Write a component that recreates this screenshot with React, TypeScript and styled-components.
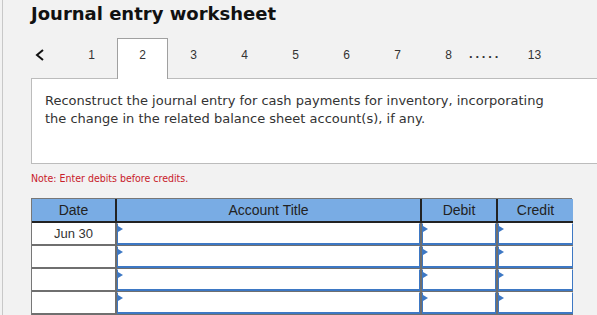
import React from "react";
import styled, { createGlobalStyle } from "styled-components";

const GlobalStyle = createGlobalStyle`
  html, body { margin: 0; padding: 0; background: #f2f2f2; }
  body { font-family: "Liberation Sans", Arial, sans-serif; }
`;

const Page = styled.div`
  margin-left: 2px;
  border-left: 1px solid #c8c8c8;
  background: #f2f2f2;
  min-height: 315px;
  padding-left: 28px;
  overflow: hidden;
`;

const Title = styled.h1`
  margin: 0;
  padding-top: 3px;
  height: 38px;
  box-sizing: border-box;
  font-family: "DejaVu Sans", Verdana, sans-serif;
  font-weight: bold;
  font-size: 18px;
  line-height: 21px;
  color: #111;
`;

const TabRow = styled.div`
  display: flex;
  align-items: stretch;
  height: 40px;
  position: relative;
  z-index: 1;
`;

const Chevron = styled.div`
  width: 35px;
  padding: 9px 0 0 4px;
  box-sizing: border-box;
`;

const Tab = styled.div<{ $active?: boolean }>`
  width: 51px;
  box-sizing: border-box;
  padding-top: 9px;
  text-align: center;
  font-size: 12px;
  line-height: 14px;
  color: #333;
  border: 1px solid ${(p) => (p.$active ? "#a0a0a0" : "transparent")};
  border-bottom: none;
  background: ${(p) => (p.$active ? "#fff" : "transparent")};
  height: ${(p) => (p.$active ? "41px" : "40px")};
`;

const Dots = styled.div`
  width: 40px;
  margin-left: -5px;
  padding-top: 9px;
  font-size: 13px;
  line-height: 14px;
  font-weight: bold;
  letter-spacing: 2.8px;
  color: #333;
`;

const Panel = styled.div`
  background: #fff;
  border: 1px solid #bcbcbc;
  border-right: none;
  height: 86px;
  box-sizing: border-box;
  padding: 13px 0 0 13px;
  margin-right: -10px;
`;

const Prompt = styled.p`
  margin: 0;
  width: 510px;
  font-family: "DejaVu Sans", Verdana, sans-serif;
  font-size: 13px;
  line-height: 18px;
  color: #333;
`;

const Note = styled.div`
  margin-top: 7px;
  height: 27px;
  font-family: "DejaVu Sans Condensed", "DejaVu Sans", Tahoma, sans-serif;
  font-size: 10.5px;
  line-height: 14px;
  color: #c8202a;
`;

const Grid = styled.div`
  display: grid;
  grid-template-columns: 85px 305px 76px 75px;
  width: 541px;
  box-sizing: border-box;
  border-top: 1px solid #777;
  border-left: 1px solid #777;
  border-right: 1px solid #777;
`;

const HeadCell = styled.div<{ $last?: boolean }>`
  height: 24px;
  box-sizing: border-box;
  background: #79ace4;
  border-right: ${(p) => (p.$last ? "none" : "2px solid #222")};
  border-bottom: 2px solid #222;
  text-align: center;
  font-size: 14px;
  line-height: 16px;
  padding-top: 3px;
  color: #222;
`;

const DateCell = styled.div`
  height: 23px;
  box-sizing: border-box;
  background: #fff;
  border-right: 2px solid #6f6f6f;
  border-bottom: 2px solid #6f6f6f;
  text-align: center;
  font-size: 13px;
  line-height: 15px;
  padding-top: 3px;
  color: #333;
`;

const InputCell = styled.div<{ $last?: boolean }>`
  height: 23px;
  box-sizing: border-box;
  background: #fff;
  border-right: ${(p) => (p.$last ? "none" : "2px solid #6f6f6f")};
  border-bottom: 1px solid #6f6f6f;
  display: flex;
`;

const Field = styled.div`
  flex: 1;
  position: relative;
  border: 1px solid #3d78c4;
  border-bottom: 2px solid #3d78c4;
  border-top-color: #fff;
  background: #fff;
  &::before {
    content: "";
    position: absolute;
    left: 0;
    top: 2px;
    border-left: 5px solid #3d78c4;
    border-top: 3px solid transparent;
    border-bottom: 3px solid transparent;
  }
`;

const rows = ["Jun 30", "", "", "", ""];

export default function App() {
  return (
    <>
      <GlobalStyle />
      <Page>
        <Title>Journal entry worksheet</Title>
        <TabRow>
          <Chevron>
            <svg width="10" height="12" viewBox="0 0 10 12">
              <polyline points="8,1 2,6 8,11" fill="none" stroke="#111" strokeWidth="2" />
            </svg>
          </Chevron>
          {["1", "2", "3", "4", "5", "6", "7", "8"].map((t) => (
            <Tab key={t} $active={t === "2"}>
              {t}
            </Tab>
          ))}
          <Dots>.....</Dots>
          <Tab>13</Tab>
        </TabRow>
        <Panel>
          <Prompt>
            Reconstruct the journal entry for cash payments for inventory, incorporating the change in
            the related balance sheet account(s), if any.
          </Prompt>
        </Panel>
        <Note>Note: Enter debits before credits.</Note>
        <Grid>
          <HeadCell>Date</HeadCell>
          <HeadCell>Account Title</HeadCell>
          <HeadCell>Debit</HeadCell>
          <HeadCell $last>Credit</HeadCell>
          {rows.map((d, i) => (
            <React.Fragment key={i}>
              <DateCell>{d}</DateCell>
              <InputCell>
                <Field />
              </InputCell>
              <InputCell>
                <Field />
              </InputCell>
              <InputCell $last>
                <Field />
              </InputCell>
            </React.Fragment>
          ))}
        </Grid>
      </Page>
    </>
  );
}
